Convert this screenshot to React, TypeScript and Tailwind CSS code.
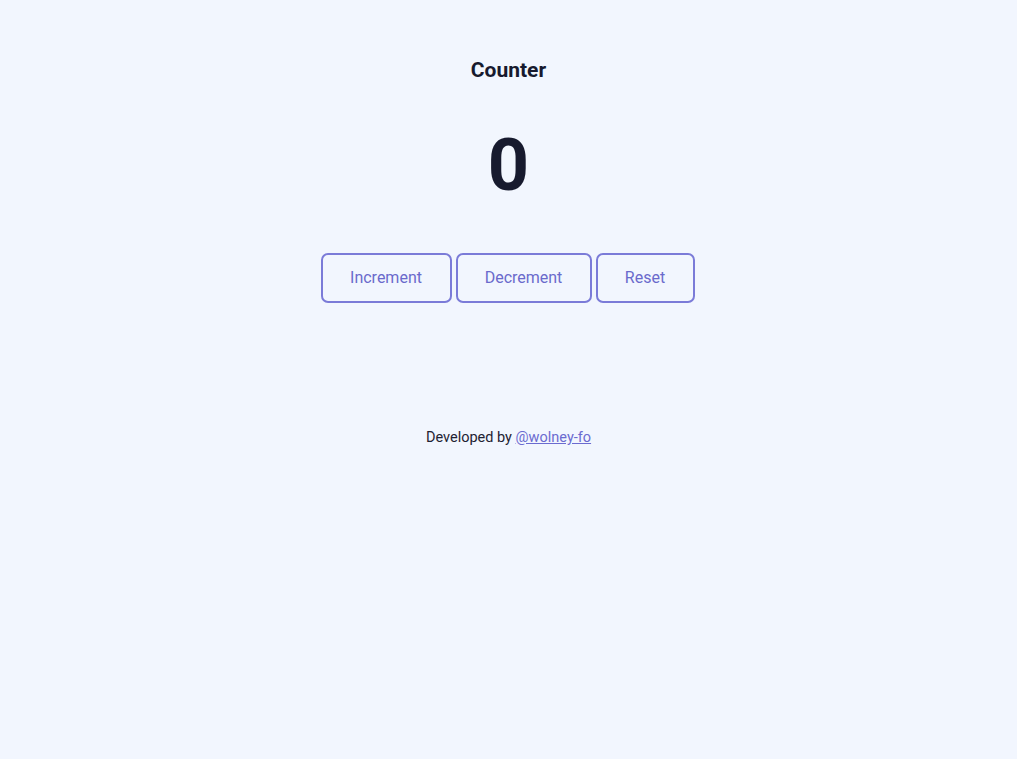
import React, { useState } from "react";

export default function App() {
  const [count, setCount] = useState(0);
  return (
    <div className="min-h-screen w-full bg-[#f2f6fe] flex flex-col items-center" style={{ fontFamily: "Roboto, 'Liberation Sans', sans-serif" }}>
      <h1 className="mt-[56px] text-[21px] leading-[28px] font-bold text-[#171a2e]">Counter</h1>
      <div className="mt-[37px] text-[72px] leading-[90px] font-bold text-[#171a2e]">{count}</div>
      <div className="mt-[42px] flex gap-[4px] pr-[2px]">
        <button onClick={() => setCount(count + 1)} className="w-[131px] h-[50px] rounded-[7px] border-2 border-[#7b7bd8] text-[16px] font-normal text-[#6a6acc]">Increment</button>
        <button onClick={() => setCount(count - 1)} className="w-[136px] h-[50px] rounded-[7px] border-2 border-[#7b7bd8] text-[16px] font-normal text-[#6a6acc]">Decrement</button>
        <button onClick={() => setCount(0)} className="w-[99px] h-[50px] rounded-[7px] border-2 border-[#7b7bd8] text-[16px] font-normal text-[#6a6acc]">Reset</button>
      </div>
      <p className="mt-[125px] text-[14.5px] leading-[20px] font-normal text-[#1f2233]">
        Developed by <a href="#" className="text-[#6b6bd0] underline">@wolney-fo</a>
      </p>
    </div>
  );
}
